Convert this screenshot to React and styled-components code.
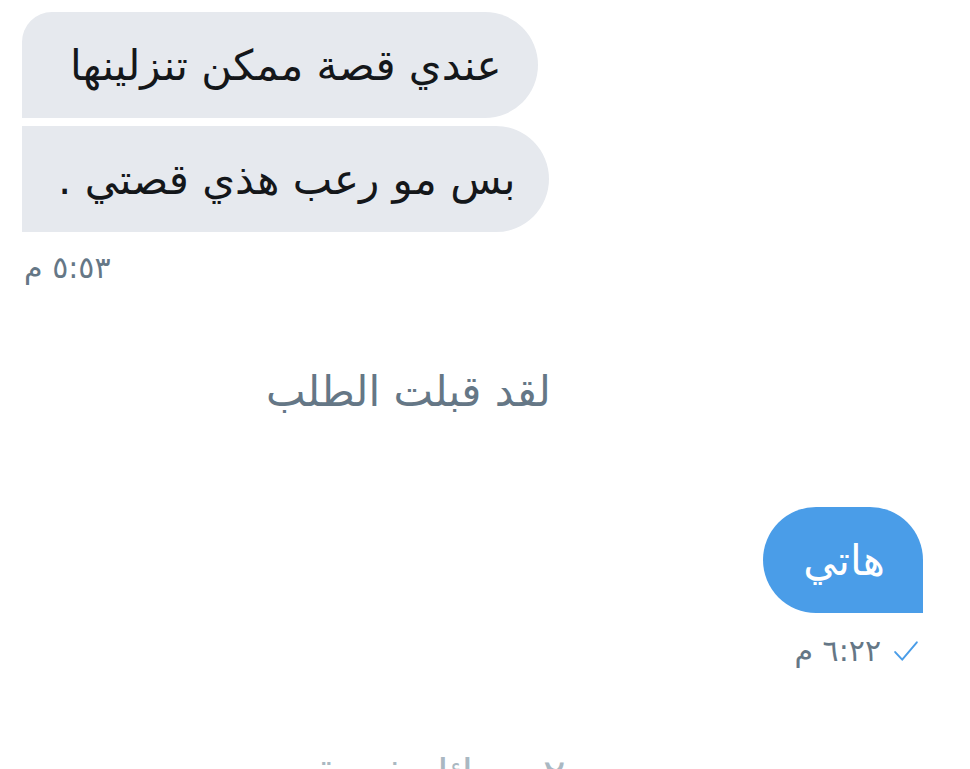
import React from 'react';
import styled, { createGlobalStyle } from 'styled-components';

const GlobalStyle = createGlobalStyle`
  body {
    margin: 0;
    background: #ffffff;
    font-family: "DejaVu Sans", "Noto Sans", sans-serif;
  }
`;

const Page = styled.div`
  width: 970px;
  height: 769px;
  overflow: hidden;
  display: flex;
  flex-direction: column;
  background: #ffffff;
`;

const Received = styled.div`
  display: flex;
  flex-direction: column;
  align-items: flex-start;
  gap: 8px;
  padding: 12px 0 0 22px;
`;

const Sent = styled.div`
  display: flex;
  flex-direction: column;
  align-items: flex-end;
  padding: 0 47px 0 0;
  margin-top: 91px;
`;

const Bubble = styled.div`
  direction: rtl;
  height: 106px;
  display: flex;
  align-items: center;
  padding: 0 ${p => p.$padR || 36}px 0 ${p => p.$padL || 36}px;
  box-sizing: border-box;
  font-size: 42px;
  color: ${p => (p.$sent ? '#ffffff' : '#14171a')};
  background: ${p => (p.$sent ? '#4a9de8' : '#e6e9ee')};
  border-radius: ${p => p.$radius};
`;

const Stamp = styled.div`
  direction: rtl;
  display: flex;
  align-items: center;
  gap: 12px;
  font-size: 30px;
  color: #657786;
  margin-top: ${p => p.$top || 0}px;
  padding: 0 ${p => p.$padR || 0}px 0 ${p => p.$padL || 0}px;
`;

const Check = styled.svg`
  width: 26px;
  height: 26px;
`;

const Notice = styled.div`
  direction: rtl;
  align-self: flex-start;
  margin: 82px 0 0 266px;
  font-size: 42px;
  color: #657786;
`;

const Footer = styled.div`
  direction: rtl;
  align-self: flex-start;
  margin: 82px 0 0 232px;
  font-size: 42px;
  color: #aab8c2;
  white-space: nowrap;
`;

export default function App() {
  return (
    <>
      <GlobalStyle />
      <Page>
        <Received>
          <Bubble $padL={48} $radius="30px 53px 53px 0">عندي قصة ممكن تنزلينها</Bubble>
          <Bubble $padR={34} $radius="0 53px 53px 0">بس مو رعب هذي قصتي .</Bubble>
          <Stamp $top={10} $padL={2}>٥:٥٣ م</Stamp>
        </Received>
        <Notice>لقد قبلت الطلب</Notice>
        <Sent>
          <Bubble $sent $padL={40} $padR={38} $radius="53px 53px 0 53px">هاتي</Bubble>
          <Stamp $top={20} $padR={4}>
            <Check viewBox="0 0 24 24" fill="none" stroke="#4a9de8" strokeWidth="1.8" strokeLinecap="round" strokeLinejoin="round">
              <path d="M2 13 L8.5 20 L22 4" />
            </Check>
            <span>٦:٢٢ م</span>
          </Stamp>
        </Sent>
        <Footer>٢ رسائل في قصتي</Footer>
      </Page>
    </>
  );
}
